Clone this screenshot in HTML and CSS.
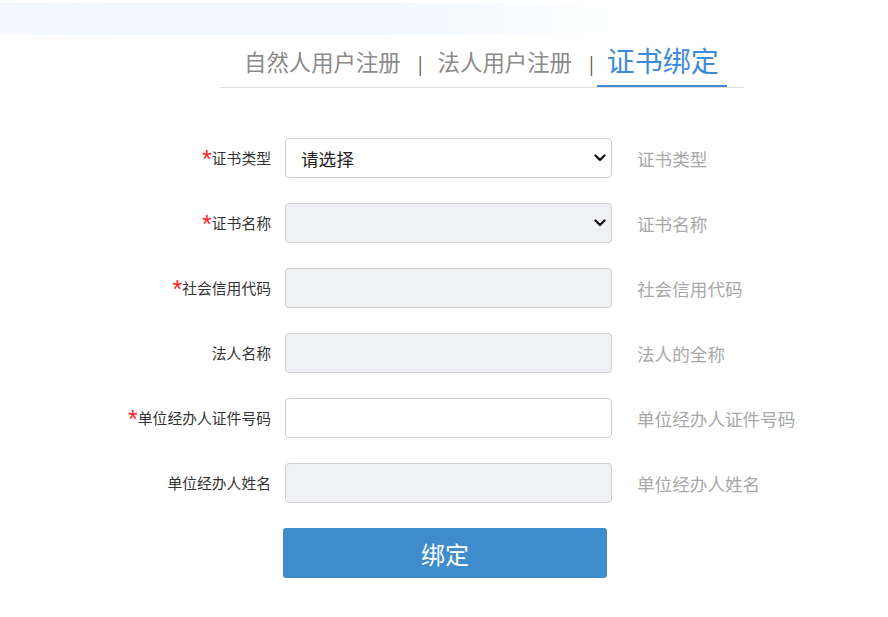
FILE: index.html
```html
<!DOCTYPE html>
<html lang="zh-CN">
<head>
<meta charset="utf-8">
<title>证书绑定</title>
<link rel="stylesheet" href="styles.css">
</head>
<body>
<div class="topband"></div>
<div class="tabs">
  <span class="tab">自然人用户注册</span>
  <span class="sep">|</span>
  <span class="tab">法人用户注册</span>
  <span class="sep">|</span>
  <span class="tab active">证书绑定</span>
</div>
<form class="form">
  <div class="row">
    <label class="label"><span class="req">*</span>证书类型</label>
    <div class="select-wrap">
      <select class="field">
        <option>请选择</option>
      </select>
      <svg class="chev" width="12" height="8" viewBox="0 0 12 8"><path d="M1.5 1.5 L6 6 L10.5 1.5" fill="none" stroke="#111" stroke-width="2.2" stroke-linecap="round" stroke-linejoin="round"/></svg>
    </div>
    <span class="hint">证书类型</span>
  </div>
  <div class="row">
    <label class="label"><span class="req">*</span>证书名称</label>
    <div class="select-wrap">
      <select class="field disabled">
        <option></option>
      </select>
      <svg class="chev" width="12" height="8" viewBox="0 0 12 8"><path d="M1.5 1.5 L6 6 L10.5 1.5" fill="none" stroke="#111" stroke-width="2.2" stroke-linecap="round" stroke-linejoin="round"/></svg>
    </div>
    <span class="hint">证书名称</span>
  </div>
  <div class="row">
    <label class="label"><span class="req">*</span>社会信用代码</label>
    <input class="field disabled" type="text" readonly>
    <span class="hint">社会信用代码</span>
  </div>
  <div class="row">
    <label class="label">法人名称</label>
    <input class="field disabled" type="text" readonly>
    <span class="hint">法人的全称</span>
  </div>
  <div class="row">
    <label class="label"><span class="req">*</span>单位经办人证件号码</label>
    <input class="field" type="text">
    <span class="hint">单位经办人证件号码</span>
  </div>
  <div class="row">
    <label class="label">单位经办人姓名</label>
    <input class="field disabled" type="text" readonly>
    <span class="hint">单位经办人姓名</span>
  </div>
  <button class="btn" type="button">绑定</button>
</form>
</body>
</html>
```
FILE: styles.css
```css
html, body {
  margin: 0;
  padding: 0;
  background: #fff;
  font-family: "Noto Sans CJK SC", "Noto Sans", sans-serif;
}

.topband {
  margin-top: 3px;
  height: 32px;
  width: 100%;
  background: linear-gradient(90deg, #f5f9ff 0%, #f1f7fe 35%, #f7fbff 55%, #ffffff 72%);
}

.tabs {
  margin-left: 220px;
  width: 524px;
  height: 53px;
  border-bottom: 1px solid #dedede;
  display: flex;
  align-items: center;
  box-sizing: border-box;
  padding-left: 24px;
}

.tab {
  font-size: 22.4px;
  color: #8a8a8a;
  line-height: 52px;
  white-space: nowrap;
}

.sep {
  font-size: 18px;
  color: #555;
  margin: 4px 15px 0 17px;
  line-height: 52px;
}

.tab.active {
  font-size: 28px;
  color: #3d8ad9;
  padding: 0 8px 0 10px;
  margin-left: -12px;
  line-height: 50px;
  height: 50px;
  border-bottom: 2px solid #3d8ad9;
  align-self: flex-start;
}

.form {
  margin-top: 50px;
  display: flex;
  flex-direction: column;
  gap: 25px;
}

.row {
  display: flex;
  align-items: center;
  height: 40px;
}

.label {
  width: 271px;
  text-align: right;
  font-size: 14.8px;
  line-height: 20px;
  color: #333;
  margin-right: 14px;
  white-space: nowrap;
}

.req {
  color: #f22;
  font-family: "Liberation Sans", sans-serif;
  font-size: 25px;
  font-weight: normal;
  vertical-align: -4px;
  line-height: 0;
  margin-right: 0;
}

.select-wrap {
  position: relative;
  width: 327px;
  height: 40px;
}

.select-wrap .field {
  appearance: none;
  -webkit-appearance: none;
}

.chev {
  position: absolute;
  right: 6px;
  top: 16px;
  pointer-events: none;
}

.field {
  box-sizing: border-box;
  width: 327px;
  height: 40px;
  border: 1px solid #cfcfcf;
  border-radius: 4px;
  background: #fff;
  font-family: "Noto Sans CJK SC", sans-serif;
  font-size: 17.6px;
  color: #222;
  padding: 0 15px;
  outline: none;
}

.field.disabled {
  background: #f0f1f5;
}

.hint {
  margin-left: 25px;
  font-size: 17.6px;
  color: #a8a8a8;
  white-space: nowrap;
}

.btn {
  margin-left: 283px;
  width: 324px;
  height: 50px;
  border: none;
  border-radius: 3px;
  background: #3f8bcb;
  color: #fff;
  font-family: "Noto Sans CJK SC", sans-serif;
  font-size: 24px;
}
```
